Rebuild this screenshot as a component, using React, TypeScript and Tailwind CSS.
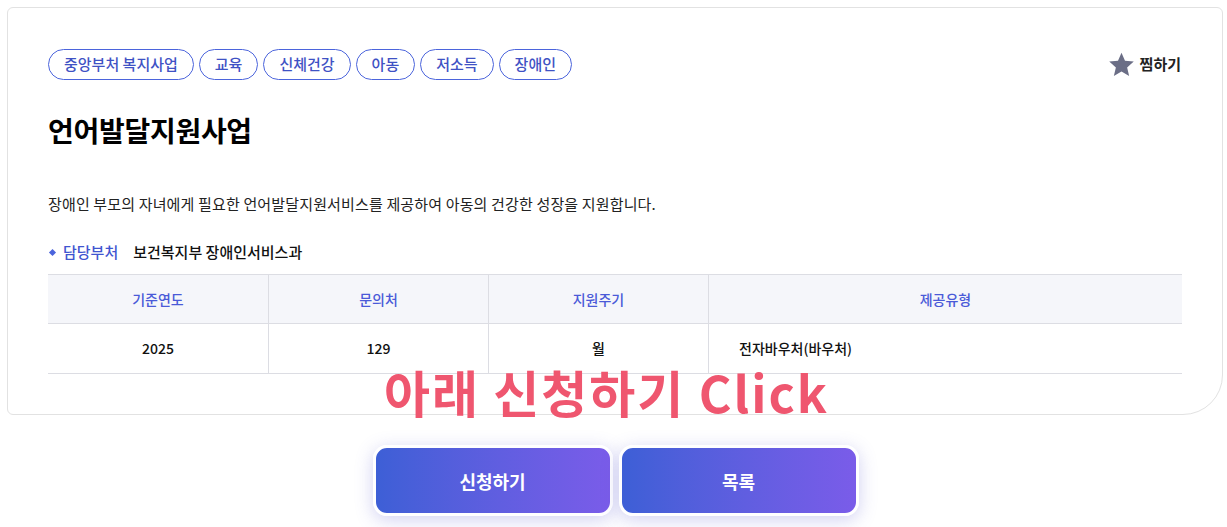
const tags = ['중앙부처 복지사업', '교육', '신체건강', '아동', '저소득', '장애인']

const columns = [
  { label: '기준연도', value: '2025', width: 'w-[220px]', align: 'text-center' },
  { label: '문의처', value: '129', width: 'w-[220px]', align: 'text-center' },
  { label: '지원주기', value: '월', width: 'w-[220px]', align: 'text-center' },
  { label: '제공유형', value: '전자바우처(바우처)', width: 'flex-1', align: 'text-left pl-[30px]' },
]

function StarIcon() {
  return (
    <svg viewBox="0 0 24 24" className="size-[27px]" aria-hidden="true">
      <path
        d="M12 1.5l3.1 7.2 7.8.7-5.9 5.2 1.8 7.6L12 18.2l-6.8 4 1.8-7.6L1.1 9.4l7.8-.7z"
        fill="#6b6e86"
      />
    </svg>
  )
}

export default function App() {
  return (
    <div
      className="relative h-[527px] w-full bg-white pt-[7px] pl-[7px]"
      style={{ fontFamily: '"Noto Sans CJK KR", "Noto Sans", sans-serif' }}
    >
      <div className="w-[1216px] rounded-tl-md rounded-tr-md rounded-bl-md rounded-br-[40px] border border-[#e2e2e2] px-10 pt-[41px] pb-10">
        <div className="flex items-center justify-between">
          <div className="flex gap-[5px]">
            {tags.map((tag) => (
              <span
                key={tag}
                className="flex h-[31px] items-center rounded-full border border-[#4b64dc] px-[15px] text-[15px] font-medium text-[#3f52c4]"
              >
                {tag}
              </span>
            ))}
          </div>
          <button type="button" className="mr-[1px] flex items-center gap-[5px] text-[15px] font-bold text-[#222]">
            <StarIcon />
            찜하기
          </button>
        </div>

        <h1 className="mt-[30px] text-[28px] leading-[40px] font-bold tracking-[-0.01em] text-black">
          언어발달지원사업
        </h1>

        <p className="mt-[42px] text-[15px] leading-[24px] tracking-[0.01em] text-[#222]">
          장애인 부모의 자녀에게 필요한 언어발달지원서비스를 제공하여 아동의 건강한 성장을 지원합니다.
        </p>

        <div className="mt-[24px] flex items-center text-[15px] leading-[24px] font-medium">
          <span className="ml-[2px] mr-[8px] inline-block size-[5px] rotate-45 bg-[#4b64dc]" />
          <span className="text-[#3f55d0]">담당부처</span>
          <span className="ml-[15px] text-[#111]">보건복지부 장애인서비스과</span>
        </div>

        <div className="mt-[10px] border-t border-[#dcdde3]">
          <div className="flex h-[49px] border-b border-[#dcdde3] bg-[#f5f6fa]">
            {columns.map((c, i) => (
              <div
                key={c.label}
                className={`${c.width} flex items-center justify-center text-[14px] font-medium text-[#4a5ad8] ${i > 0 ? 'border-l border-[#dcdde3]' : ''}`}
              >
                {c.label}
              </div>
            ))}
          </div>
          <div className="flex h-[50px] border-b border-[#dcdde3]">
            {columns.map((c, i) => (
              <div
                key={c.label}
                className={`${c.width} ${c.align} flex items-center text-[14px] font-medium text-[#111] ${c.align === 'text-center' ? 'justify-center' : ''} ${i > 0 ? 'border-l border-[#dcdde3]' : ''}`}
              >
                {c.value}
              </div>
            ))}
          </div>
        </div>
      </div>

      <div className="mt-[30px] flex justify-center gap-[6px] pr-[3px]">
        {['신청하기', '목록'].map((label) => (
          <button
            key={label}
            type="button"
            className="flex h-[71px] w-[240px] items-center justify-center rounded-[14px] border-[3px] border-white bg-gradient-to-r from-[#3d5fd6] to-[#7a5ce9] pt-[2px] text-[18px] font-bold text-white shadow-[0_4px_18px_rgba(90,90,210,0.28)]"
          >
            {label}
          </button>
        ))}
      </div>

      <div className="absolute top-[358px] left-[384px] text-[50px] leading-[66px] font-bold text-[#ef566f] tracking-[0.04em]">
        아래 신청하기 Click
      </div>
    </div>
  )
}
